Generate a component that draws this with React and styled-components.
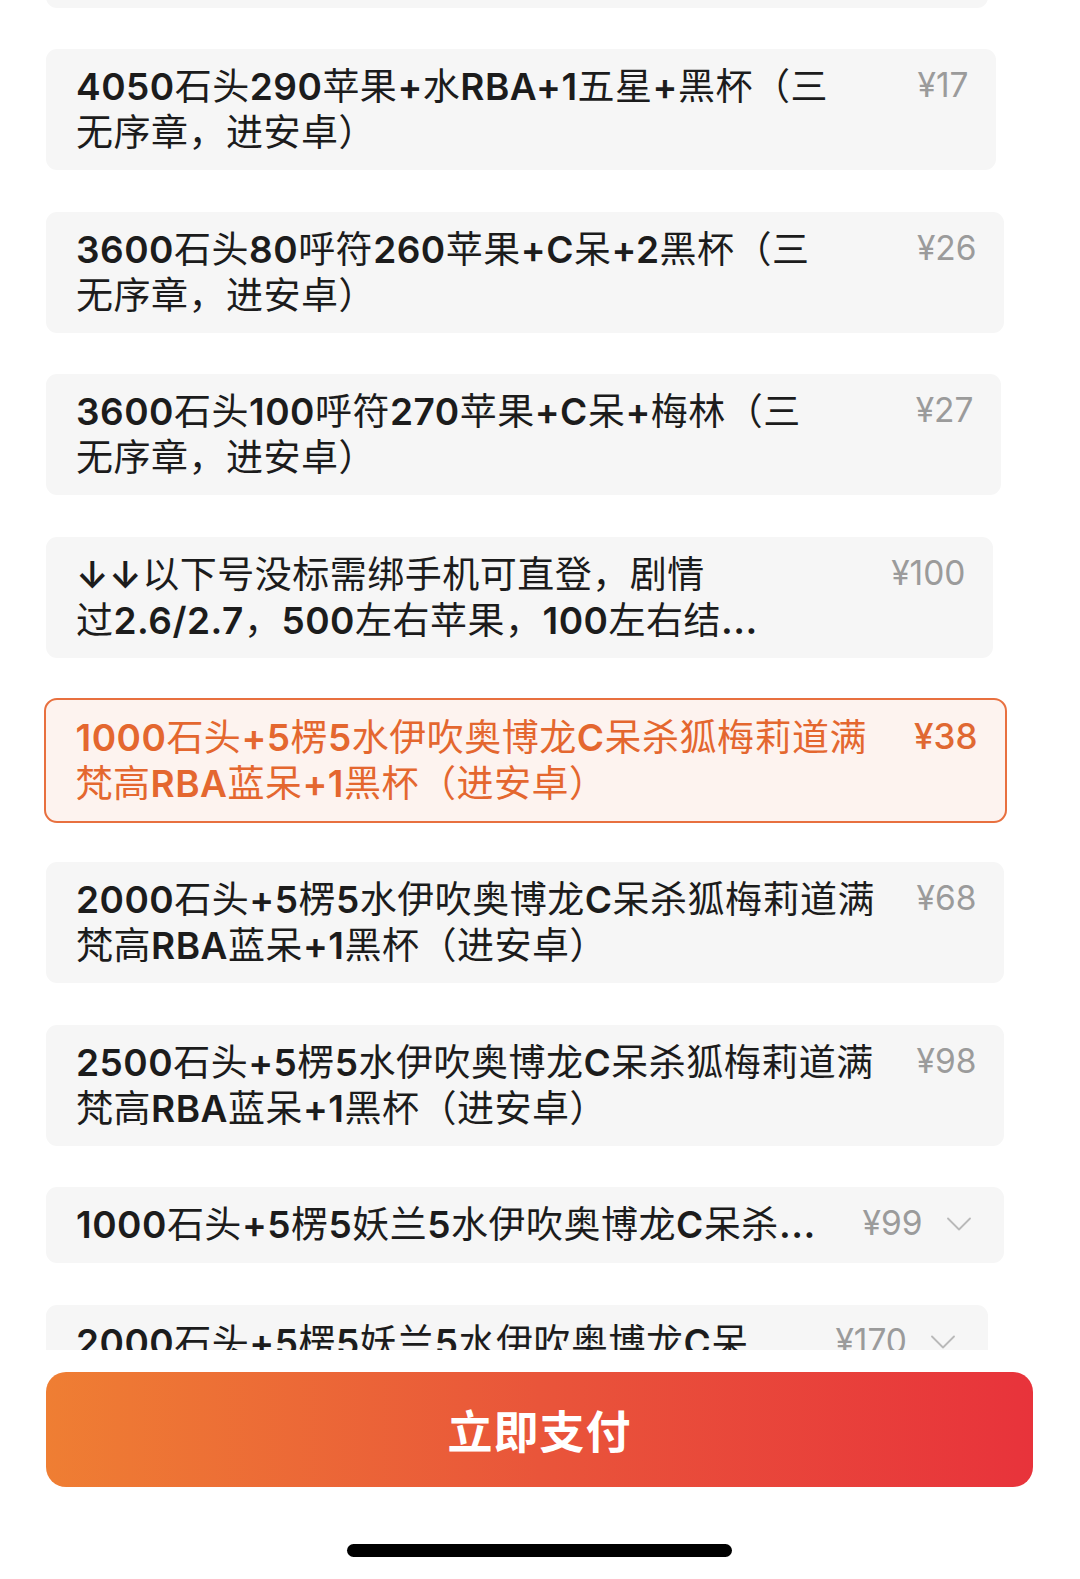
import React, { useLayoutEffect, useRef } from 'react';
import styled, { createGlobalStyle, css } from 'styled-components';

const GlobalStyle = createGlobalStyle`
  html, body {
    margin: 0;
    padding: 0;
    background: #fff;
  }
  body {
    font-family: Inter, "Noto Sans CJK SC", sans-serif;
    -webkit-font-smoothing: antialiased;
  }
`;

const Page = styled.div`
  width: 1080px;
  height: 1579px;
  display: flex;
  flex-direction: column;
  background: #fff;
  overflow: hidden;
`;

const ListViewport = styled.div`
  height: 1349.5px;
  flex: none;
  overflow-y: auto;
  scrollbar-width: none;

  &::-webkit-scrollbar {
    display: none;
  }
`;

const List = styled.div`
  display: flex;
  flex-direction: column;
  align-items: flex-start;
  gap: 41.4px;
  padding: 20px 0 40px 46px;
`;

const Card = styled.div`
  box-sizing: border-box;
  display: flex;
  align-items: flex-start;
  gap: 24px;
  padding: 12px 27px 17px 30px;
  border-radius: 11px;
  background: #f6f6f6;
  color: #1c1c1c;

  ${({ $selected }) =>
    $selected &&
    css`
      margin: -1px 0 -2px -2.5px;
      border: 2.5px solid #e8703f;
      border-radius: 13px;
      background: #fdf3ef;
      color: #e4672f;
    `}
`;

const Title = styled.div`
  flex: 1;
  min-width: 0;
  font-family: "Noto Sans CJK SC", sans-serif;
  font-size: 37px;
  font-weight: 400;
  line-height: 46px;
  letter-spacing: 0.5px;
  white-space: pre-line;

  ${({ $single }) =>
    $single &&
    css`
      white-space: nowrap;
      overflow: hidden;
      text-overflow: ellipsis;
    `}
`;

const Latin = styled.span`
  font-family: Inter, "Noto Sans CJK SC", sans-serif;
  font-weight: 600;
  line-height: 1;
`;

const Price = styled.div`
  flex: none;
  margin-top: 1px;
  font-size: 33.5px;
  line-height: 46px;
  font-weight: 400;
  color: ${({ $selected }) => ($selected ? '#e06832' : '#9b9b9b')};
  ${({ $selected }) =>
    $selected &&
    css`
      font-weight: 500;
      font-size: 35px;
    `}
`;

const Chevron = styled.svg`
  flex: none;
  width: 24px;
  height: 14px;
  margin: 18px 6px 0 0;
`;

const Footer = styled.div`
  flex: 1;
  display: flex;
  flex-direction: column;
  padding: 22.5px 47px 0 46px;
`;

const PayButton = styled.button`
  height: 115px;
  border: none;
  border-radius: 20px;
  background: linear-gradient(90deg, #ef7e33 0%, #e9553a 50%, #e8333b 100%);
  color: #fff;
  font-family: "Noto Sans CJK SC", sans-serif;
  font-size: 45px;
  font-weight: 700;
  letter-spacing: 1px;
  cursor: pointer;
`;

const HomeIndicator = styled.div`
  align-self: center;
  width: 385px;
  height: 13px;
  margin-top: 57px;
  border-radius: 7px;
  background: #000;
`;

const items = [
  { id: 0, title: '2000石头+5楞5水伊吹奥博龙C呆杀狐梅莉道满\n梵高RBA蓝呆+1黑杯（三无序章）', price: '¥16', width: 942 },
  { id: 1, title: '4050石头290苹果+水RBA+1五星+黑杯（三\n无序章，进安卓）', price: '¥17', width: 949.5 },
  { id: 2, title: '3600石头80呼符260苹果+C呆+2黑杯（三\n无序章，进安卓）', price: '¥26', width: 957.5 },
  { id: 3, title: '3600石头100呼符270苹果+C呆+梅林（三\n无序章，进安卓）', price: '¥27', width: 954.5 },
  { id: 4, title: '↓↓以下号没标需绑手机可直登，剧情\n过2.6/2.7，500左右苹果，100左右结...', price: '¥100', width: 946.5 },
  { id: 5, title: '1000石头+5楞5水伊吹奥博龙C呆杀狐梅莉道满\n梵高RBA蓝呆+1黑杯（进安卓）', price: '¥38', width: 963, selected: true },
  { id: 6, title: '2000石头+5楞5水伊吹奥博龙C呆杀狐梅莉道满\n梵高RBA蓝呆+1黑杯（进安卓）', price: '¥68', width: 957.5 },
  { id: 7, title: '2500石头+5楞5水伊吹奥博龙C呆杀狐梅莉道满\n梵高RBA蓝呆+1黑杯（进安卓）', price: '¥98', width: 957.5 },
  { id: 8, title: '1000石头+5楞5妖兰5水伊吹奥博龙C呆杀...', price: '¥99', width: 957.5, collapsed: true },
  { id: 9, title: '2000石头+5楞5妖兰5水伊吹奥博龙C呆', price: '¥170', width: 942, collapsed: true },
];

// digits and latin letters are set heavier than the CJK text
const renderTitle = (text) =>
  text.split(/([A-Za-z0-9+./↓]+)/).map((part, i) => (i % 2 ? <Latin key={i}>{part}</Latin> : part));

const ChevronDown = () => (
  <Chevron viewBox="0 0 24 14" fill="none">
    <polyline points="1,1.5 12,12.5 23,1.5" stroke="#b9b9b9" strokeWidth="1.8" strokeLinecap="round" strokeLinejoin="round" />
  </Chevron>
);

const App = () => {
  const viewport = useRef();

  useLayoutEffect(() => {
    // list is scrolled so the first option sits just above the fold
    viewport.current.scrollTop = 133;
  }, []);

  return (
    <Page>
      <GlobalStyle />
      <ListViewport ref={viewport}>
        <List>
          {items.map((item) => (
            <Card key={item.id} $selected={item.selected} style={{ width: item.width }}>
              <Title $single={item.collapsed}>{renderTitle(item.title)}</Title>
              <Price $selected={item.selected}>{item.price}</Price>
              {item.collapsed && <ChevronDown />}
            </Card>
          ))}
        </List>
      </ListViewport>
      <Footer>
        <PayButton type="button">立即支付</PayButton>
        <HomeIndicator />
      </Footer>
    </Page>
  );
};

export default App;
